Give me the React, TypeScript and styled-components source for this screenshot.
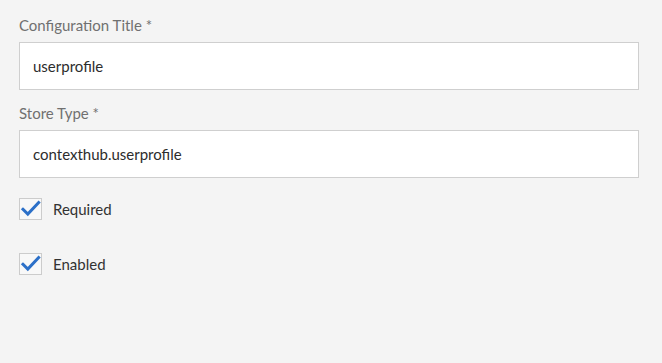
import React from 'react';
import styled, { createGlobalStyle } from 'styled-components';

const GlobalStyle = createGlobalStyle`
  html, body {
    margin: 0;
    padding: 0;
    background: #f4f4f4;
  }
  body {
    font-family: Lato, 'Open Sans', sans-serif;
  }
`;

const Form = styled.form`
  display: flex;
  flex-direction: column;
  padding: 15px 23px 0 19px;
  width: 620px;
`;

const Field = styled.div`
  display: flex;
  flex-direction: column;
  margin-bottom: 13px;
`;

const Label = styled.label`
  font-size: 15px;
  line-height: 20px;
  color: #707070;
  margin-bottom: 7px;
`;

const TextInput = styled.input`
  box-sizing: border-box;
  height: 48px;
  width: 100%;
  border: 1px solid #cfcfcf;
  background: #ffffff;
  padding: 0 13px;
  font-family: inherit;
  font-size: 15px;
  color: #2c2c2c;
  outline: none;
`;

const CheckRow = styled.label<{ $gap?: number }>`
  display: flex;
  align-items: center;
  gap: 11px;
  margin-top: ${(p) => p.$gap ?? 0}px;
  font-size: 15px;
  color: #323232;
  cursor: pointer;
`;

const Box = styled.span`
  box-sizing: border-box;
  width: 23px;
  height: 22px;
  border: 1px solid #cccccc;
  background: #f8f8f8;
  display: flex;
  align-items: center;
  justify-content: center;
`;

const Check = () => (
  <svg width="21" height="20" viewBox="0 0 21 20">
    <path
      d="M3 10.3 L7.8 15 L18.6 3.6"
      fill="none"
      stroke="#2c70c8"
      strokeWidth="3"
      strokeLinecap="square"
    />
  </svg>
);

const Checkbox = ({ label, gap }: { label: string; gap?: number }) => (
  <CheckRow $gap={gap}>
    <Box>
      <Check />
    </Box>
    {label}
  </CheckRow>
);

export default function App() {
  return (
    <>
      <GlobalStyle />
      <Form onSubmit={(e) => e.preventDefault()}>
        <Field>
          <Label>Configuration Title *</Label>
          <TextInput defaultValue="userprofile" />
        </Field>
        <Field>
          <Label>Store Type *</Label>
          <TextInput defaultValue="contexthub.userprofile" />
        </Field>
        <Checkbox label="Required" gap={7} />
        <Checkbox label="Enabled" gap={33} />
      </Form>
    </>
  );
}
